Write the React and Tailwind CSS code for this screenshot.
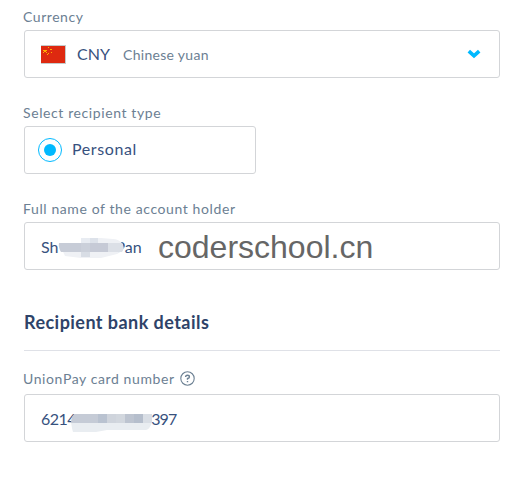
import React from 'react';

const label = 'flex items-center h-[24px] pb-[2px] text-[14px] leading-[20px] text-[#6c8093] whitespace-nowrap';
const box = 'flex items-center h-[48px] rounded-[3px] border border-[#d3d5d8] bg-white px-4 text-[#37517e] whitespace-nowrap';

function Flag() {
  return (
    <svg className="h-[19px] w-[25px] shrink-0" viewBox="0 0 25 19" shapeRendering="crispEdges">
      <path d="M0 0h25v19H0z" fill="#c4cbcb" />
      <path d="M0 1h24v17H0z" fill="#de2910" />
      <path d="M2 5h4v1H2zM3 6h2v1H3zM2 7h1v1H2zM5 7h1v1H5zM7 2h1v1H7zM9 4h2v1H9zM10 7h1v1h-1zM7 8h1v1H7zM6 9h1v1H6z" fill="#ffb000" />
    </svg>
  );
}

function NameMask() {
  return (
    <svg className="absolute left-[33px] top-[13px] h-[22px] w-[67px]" viewBox="0 0 67 22">
      <path d="M1 7H23V2H43L55 3Q60 3 64 7Q67 12 64 15L59 18L43 22H23L7 20Z" fill="#eff1f5" />
      <path d="M1 7H23V16H3Q0 11 1 7Z" fill="#c7ccd7" />
      <path d="M23 2h9v5h-9z" fill="#e8ecf2" />
      <path d="M32 2h8v5h-8z" fill="#dde2ea" />
      <path d="M23 7h9v9h-9z" fill="#cbd0da" />
      <path d="M32 7h18v9H32z" fill="#c6cad6" />
      <path d="M50 7h14q3 5 0 9H50z" fill="#dce0e7" />
      <path d="M23 16h9v5h-9z" fill="#d8dde5" />
    </svg>
  );
}

function CardMask() {
  return (
    <svg className="absolute left-[45px] top-[19px] h-[19px] w-[83px]" viewBox="0 0 83 19">
      <path d="M1 8H82Q80 15 76 16H37L26 18H3Q2 15 1 8Z" fill="#e9edf1" />
      <path d="M4 0H82V9H1Q1 3 4 0Z" fill="#c5cbd6" />
      <path d="M28 0h9v9h-9z" fill="#b9c2d0" />
      <path d="M37 0h9v9h-9z" fill="#cfd4dc" />
      <path d="M46 0h9v9h-9z" fill="#d2d7de" />
      <path d="M55 0h9v9h-9z" fill="#bdc4d0" />
      <path d="M64 0h9v9h-9z" fill="#b5becc" />
      <path d="M73 0h9v9h-9z" fill="#d9dee5" />
    </svg>
  );
}

export default function App() {
  return (
    <main className="h-[491px] w-[527px] bg-white pl-6 pr-[27px] pt-[6px] font-['Lato','Noto_Sans',sans-serif]">
      <section>
        <div className={label}><span className="-ml-px tracking-[0.55px]">Currency</span></div>
        <div className={box}>
          <Flag />
          <span className="ml-[11px] w-[46px] text-[16px] tracking-[0px]">CNY</span>
          <span className="pt-px text-[14px] tracking-[0.3px] text-[#6c8093]">Chinese yuan</span>
          <svg className="mb-px ml-auto mr-[2px] h-[10px] w-[14px]" viewBox="0 0 14 10">
            <path d="M1.8 2.1L7 6.9L12.2 2.1" fill="none" stroke="#00b9ff" strokeWidth="3.6" />
          </svg>
        </div>
      </section>

      <section className="mt-6">
        <div className={label}><span className="-ml-px tracking-[0.6px]">Select recipient type</span></div>
        <div className="flex h-[48px] w-[232px] items-center rounded-[3px] border border-[#d3d5d8] pl-[13px] text-[16px] text-[#37517e]">
          <span className="flex size-6 items-center justify-center rounded-full border border-[#00b9ff]">
            <span className="size-3 rounded-full bg-[#00b9ff]" />
          </span>
          <span className="ml-[10px] pb-[2px] tracking-[0.6px]">Personal</span>
        </div>
      </section>

      <section className="mt-6">
        <div className={label}><span className="-ml-px tracking-[0.6px]">Full name of the account holder</span></div>
        <div className={`${box} relative text-[16px]`}>
          <span className="pt-[2px]">Sh</span>
          <span className="ml-[57px] pt-[2px]">Pan</span>
          <NameMask />
          <span className="absolute left-[133px] top-[6px] font-['Liberation_Sans',Arial,sans-serif] text-[32px] leading-[36px] text-[#666666]">coderschool.cn</span>
        </div>
      </section>

      <h2 className="mt-[36px] h-[32px] text-[18px] font-bold leading-[32px] text-[#2e4369]"><span className="tracking-[0.45px]">Recipient bank details</span></h2>
      <hr className="mt-[12px] border-t border-[#dfe1e7]" />

      <section className="mt-[17px]">
        <div className={`${label} mb-[2px]`}>
          <span className="-ml-px tracking-[0.6px]">UnionPay card number</span>
          <svg className="mb-[2px] ml-[5px] size-[15px]" viewBox="0 0 15 15" fill="none" stroke="#6c8093">
            <circle cx="7.5" cy="7.5" r="6.7" strokeWidth="1.1" />
            <path d="M5.6 6.1Q5.6 4.3 7.5 4.3Q9.4 4.3 9.4 5.9Q9.4 7 7.5 7.5V8.7M7.5 9.9V11.3" strokeWidth="1.4" />
          </svg>
        </div>
        <div className={`${box} relative text-[16px]`}>
          <span className="pt-[2px] tracking-[-0.5px]">6214</span>
          <span className="ml-[75px] pt-[2px] tracking-[-0.9px]">397</span>
          <CardMask />
        </div>
      </section>
    </main>
  );
}
